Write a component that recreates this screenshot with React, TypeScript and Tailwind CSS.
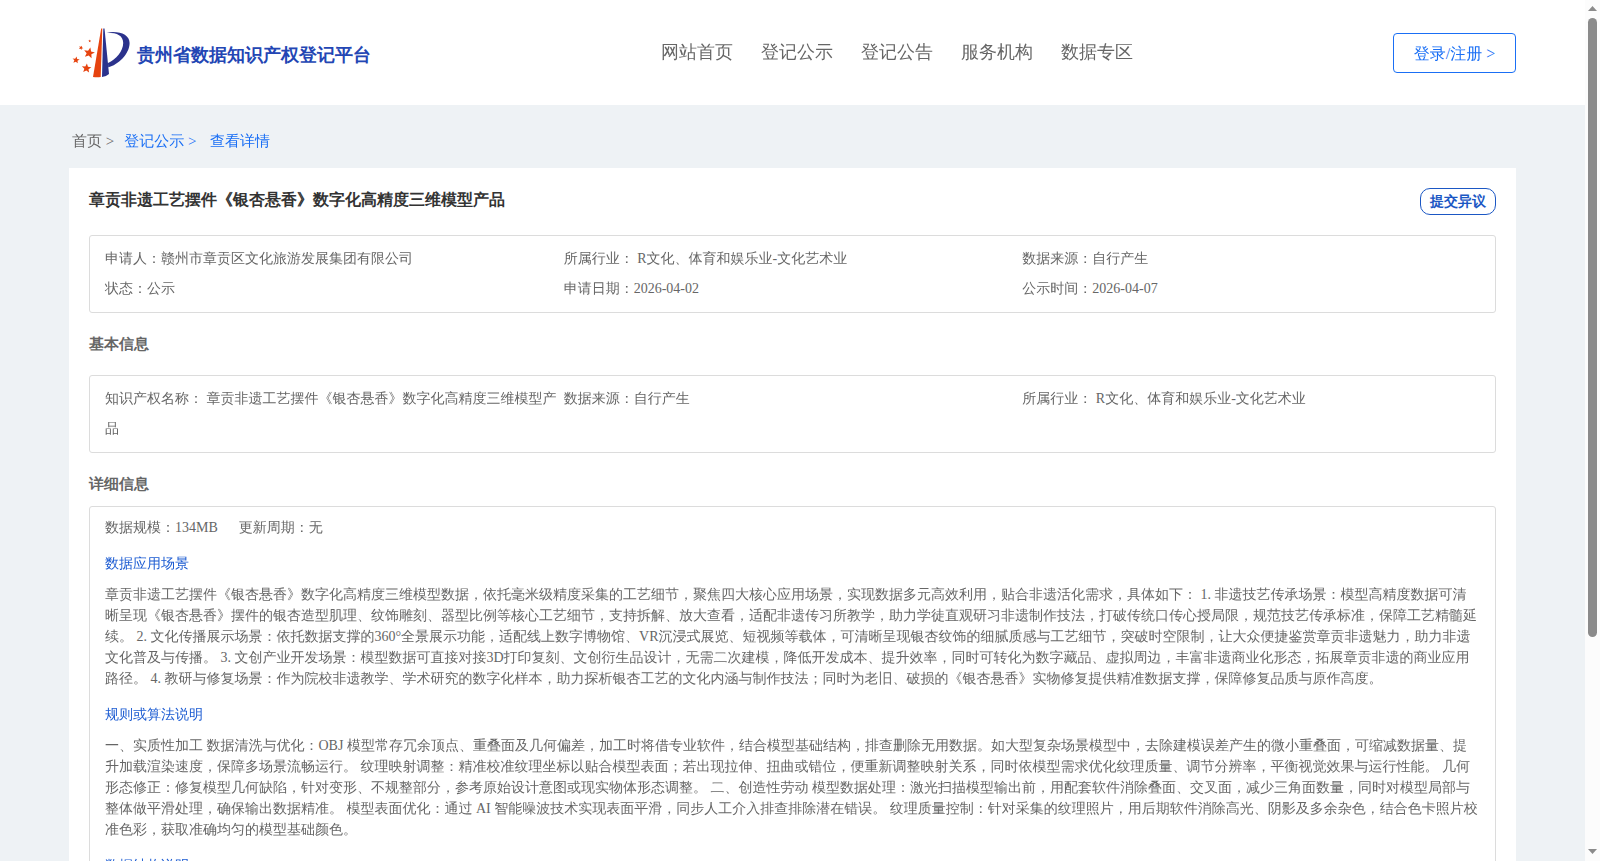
const navItems = ["网站首页", "登记公示", "登记公告", "服务机构", "数据专区"];

const summary = [
  "申请人：赣州市章贡区文化旅游发展集团有限公司",
  "所属行业： R文化、体育和娱乐业-文化艺术业",
  "数据来源：自行产生",
  "状态：公示",
  "申请日期：2026-04-02",
  "公示时间：2026-04-07",
];

const basic = [
  "知识产权名称： 章贡非遗工艺摆件《银杏悬香》数字化高精度三维模型产品",
  "数据来源：自行产生",
  "所属行业： R文化、体育和娱乐业-文化艺术业",
];

const details = [
  {
    title: "数据应用场景",
    text: "章贡非遗工艺摆件《银杏悬香》数字化高精度三维模型数据，依托毫米级精度采集的工艺细节，聚焦四大核心应用场景，实现数据多元高效利用，贴合非遗活化需求，具体如下： 1. 非遗技艺传承场景：模型高精度数据可清晰呈现《银杏悬香》摆件的银杏造型肌理、纹饰雕刻、器型比例等核心工艺细节，支持拆解、放大查看，适配非遗传习所教学，助力学徒直观研习非遗制作技法，打破传统口传心授局限，规范技艺传承标准，保障工艺精髓延续。 2. 文化传播展示场景：依托数据支撑的360°全景展示功能，适配线上数字博物馆、VR沉浸式展览、短视频等载体，可清晰呈现银杏纹饰的细腻质感与工艺细节，突破时空限制，让大众便捷鉴赏章贡非遗魅力，助力非遗文化普及与传播。 3. 文创产业开发场景：模型数据可直接对接3D打印复刻、文创衍生品设计，无需二次建模，降低开发成本、提升效率，同时可转化为数字藏品、虚拟周边，丰富非遗商业化形态，拓展章贡非遗的商业应用路径。 4. 教研与修复场景：作为院校非遗教学、学术研究的数字化样本，助力探析银杏工艺的文化内涵与制作技法；同时为老旧、破损的《银杏悬香》实物修复提供精准数据支撑，保障修复品质与原作高度。",
  },
  {
    title: "规则或算法说明",
    text: "一、实质性加工 数据清洗与优化：OBJ 模型常存冗余顶点、重叠面及几何偏差，加工时将借专业软件，结合模型基础结构，排查删除无用数据。如大型复杂场景模型中，去除建模误差产生的微小重叠面，可缩减数据量、提升加载渲染速度，保障多场景流畅运行。 纹理映射调整：精准校准纹理坐标以贴合模型表面；若出现拉伸、扭曲或错位，便重新调整映射关系，同时依模型需求优化纹理质量、调节分辨率，平衡视觉效果与运行性能。 几何形态修正：修复模型几何缺陷，针对变形、不规整部分，参考原始设计意图或现实物体形态调整。 二、创造性劳动 模型数据处理：激光扫描模型输出前，用配套软件消除叠面、交叉面，减少三角面数量，同时对模型局部与整体做平滑处理，确保输出数据精准。 模型表面优化：通过 AI 智能噪波技术实现表面平滑，同步人工介入排查排除潜在错误。 纹理质量控制：针对采集的纹理照片，用后期软件消除高光、阴影及多余杂色，结合色卡照片校准色彩，获取准确均匀的模型基础颜色。",
  },
  { title: "数据结构说明", text: "" },
];

const STAR = "M0-5 L1.400-1.700 5-1.500 2.200.8 3.100 4.200 0 2.300-3.100 4.200-2.200.8-5-1.500-1.400-1.700Z";

function Logo() {
  return (
    <svg width="58" height="50" viewBox="0 0 58 50" className="shrink-0">
      <path d="M29.200 0.500 L21 49 Q25 49.600 28.700 49 L30.300 0.500 Z" fill="#e6430f" />
      <path d="M31.300 0.500 L30 49 Q34 48.800 37 46 L32.500 0.500 Z" fill="#2b328c" />
      <path
        d="M34.500 4.700 C47 2.500 57.600 6.500 57.600 15 C57.600 26 46 37 36.200 39.300 L36 35 C44 31.500 51.200 23 51.200 15 C51.200 7.500 45 4.500 34.500 4.700 Z"
        fill="#2b328c"
      />
      <g fill="#e6430f">
        <path d={STAR} transform="translate(17.200 25) rotate(12) scale(1.100)" />
        <path d={STAR} transform="translate(14.500 40.200) rotate(5) scale(.95)" />
        <path d={STAR} transform="translate(4 32) rotate(8) scale(.72)" />
        <path d={STAR} transform="translate(9 19.800) rotate(25) scale(.45)" />
        <path d={STAR} transform="translate(17.700 13) scale(.28)" />
      </g>
    </svg>
  );
}

function InfoGrid({ items }: { items: string[] }) {
  return (
    <div className="grid grid-cols-3 rounded-[3px] border border-[#dcdcdc] py-2 pr-[14px] pl-[15px] leading-[30px]">
      {items.map((item) => (
        <div key={item}>{item}</div>
      ))}
    </div>
  );
}

function Scrollbar() {
  return (
    <div className="flex w-[15px] shrink-0 flex-col items-center justify-between bg-[#fcfcfc]">
      <svg width="15" height="18" viewBox="0 0 15 18">
        <path d="M3 11 L7.500 6 L12 11 Z" fill="#8b8b8b" />
      </svg>
      <div className="w-[9px] flex-1">
        <div className="h-[619px] rounded-full bg-[#8b8b8b]" />
      </div>
      <svg width="15" height="18" viewBox="0 0 15 18">
        <path d="M3 6 L7.500 11 L12 6 Z" fill="#8b8b8b" />
      </svg>
    </div>
  );
}

export default function App() {
  return (
    <div className="flex h-[861px] w-[1600px] overflow-hidden bg-[#eef2f5] font-['Liberation_Serif','WenQuanYi_Zen_Hei','Droid_Sans_Fallback','Noto_Sans_CJK_SC',serif] text-[14px] text-[#666]">
      <div className="min-w-0 flex-1">
        <header className="h-[105px] bg-white px-[69px]">
          <div className="flex h-full items-center justify-between">
            <div className="flex w-[592px] items-center gap-[7px] pt-px pl-[3px]">
              <Logo />
              <span className="pt-[5px] font-['Liberation_Serif',serif] text-[18px] font-bold text-[#2346b4]">
                贵州省数据知识产权登记平台
              </span>
            </div>
            <nav className="flex flex-1 gap-7 text-[18px]">
              {navItems.map((item) => (
                <a key={item}>{item}</a>
              ))}
            </nav>
            <button className="h-10 w-[123px] rounded border border-[#1a6ff5] pt-[2px] text-[16px] text-[#1a6ff5]">
              登录/注册 &gt;
            </button>
          </div>
        </header>

        <main className="px-[69px]">
          <div className="flex h-[63px] items-center pt-[10px] pl-[3px] text-[15px]">
            <span>首页 &gt;</span>
            <span className="ml-[10px] text-[#1a6ff5]">登记公示 &gt;</span>
            <span className="ml-[13.500px] text-[#1a6ff5]">查看详情</span>
          </div>

          <div className="h-[720px] bg-white px-5 pt-5">
            <div className="flex h-[47px] items-start justify-between font-['Liberation_Serif',serif]">
              <h1 className="text-[16px] leading-6 font-bold text-[#333]">
                章贡非遗工艺摆件《银杏悬香》数字化高精度三维模型产品
              </h1>
              <button className="h-[27px] w-[76px] rounded-[10px] border border-[#1b57c4] text-[14px] font-bold text-[#1b57c4]">
                提交异议
              </button>
            </div>
            <InfoGrid items={summary} />
            <h2 className="flex h-[62px] items-center font-['Liberation_Serif',serif] text-[15px] font-bold">基本信息</h2>
            <InfoGrid items={basic} />
            <h2 className="flex h-[53px] items-center pt-[10px] font-['Liberation_Serif',serif] text-[15px] font-bold">
              详细信息
            </h2>
            <div className="h-[400px] rounded-[3px] border border-[#dcdcdc] px-[15px] pt-[10px] leading-[21px]">
              <div className="flex gap-[21px]">
                <span>数据规模：134MB</span>
                <span>更新周期：无</span>
              </div>
              {details.map((item) => (
                <section key={item.title}>
                  <h3 className="mt-[15px] mb-[10px] text-[#1b5bd2]">{item.title}</h3>
                  <p>{item.text}</p>
                </section>
              ))}
            </div>
          </div>
        </main>
      </div>
      <Scrollbar />
    </div>
  );
}
